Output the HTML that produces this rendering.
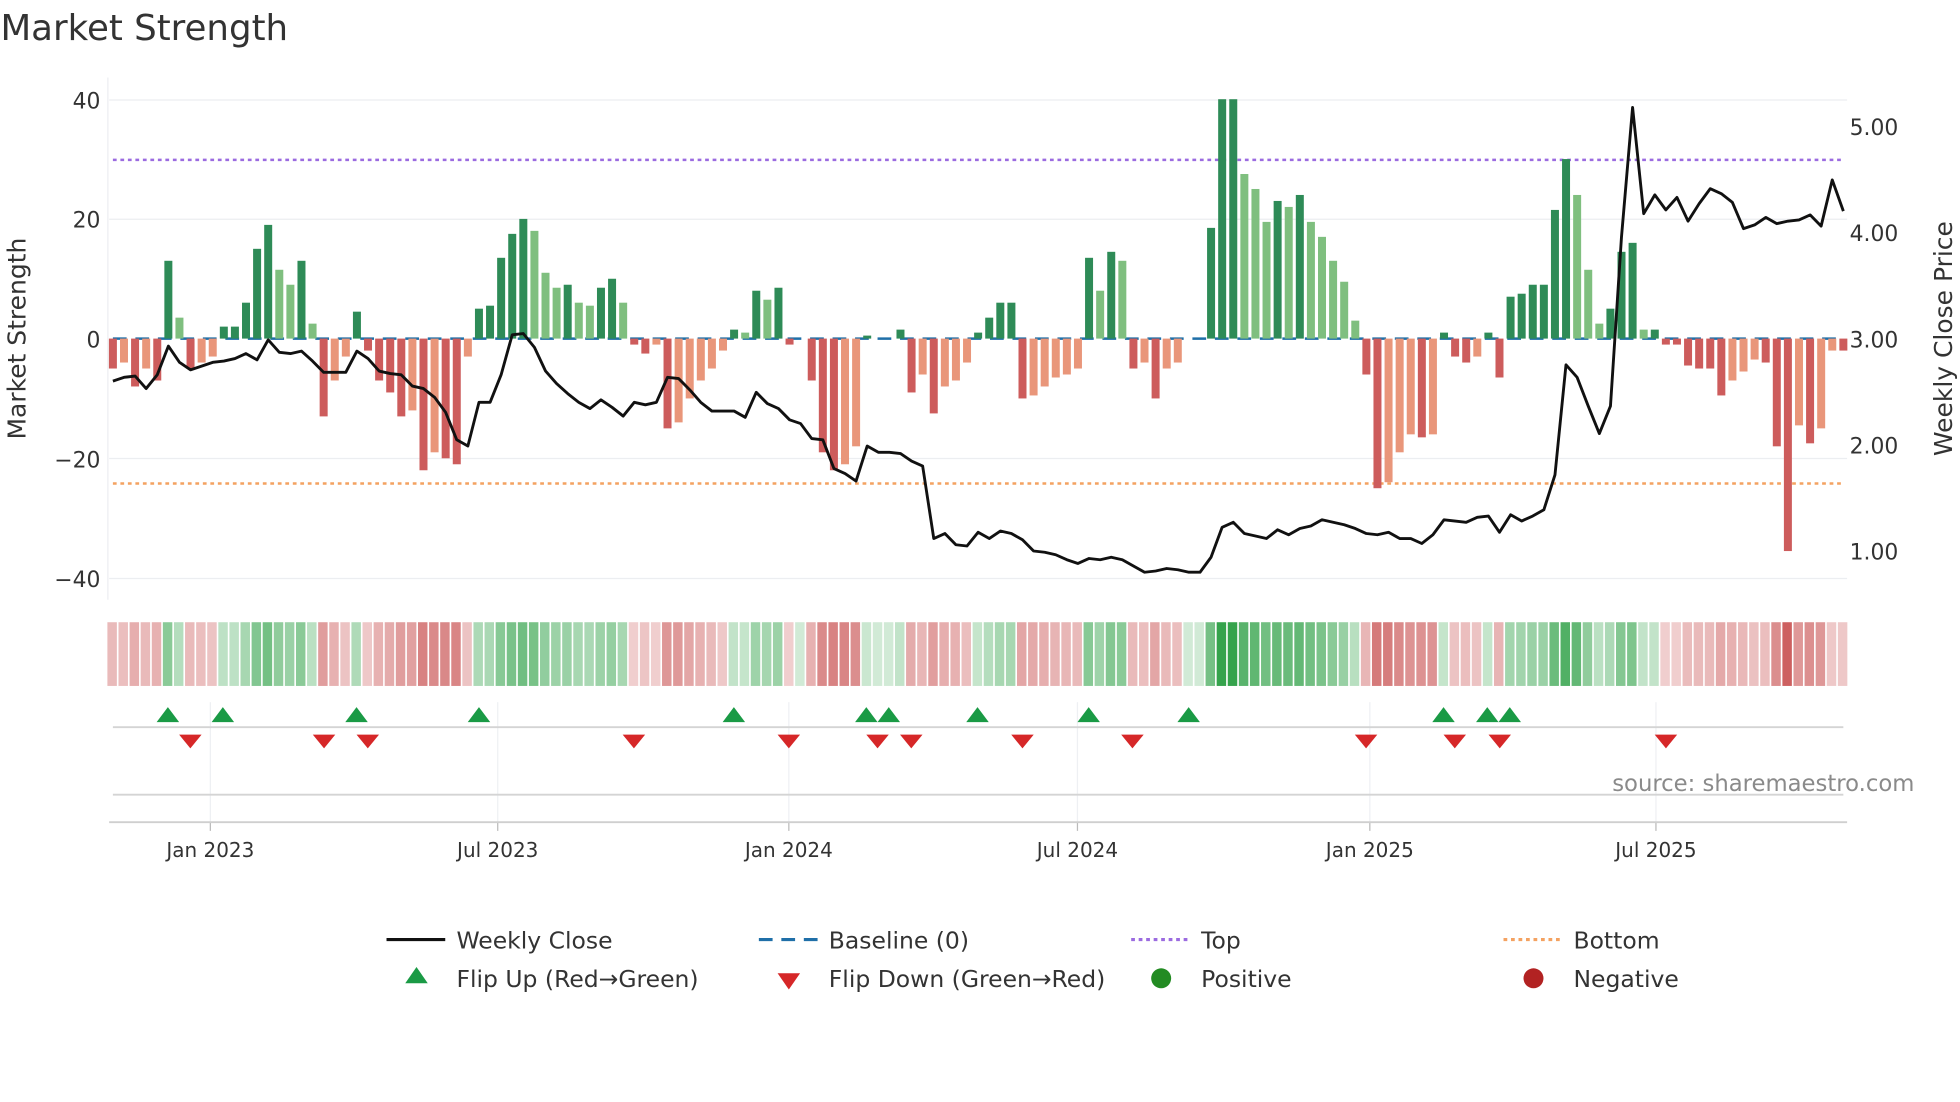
<!DOCTYPE html>
<html><head><meta charset="utf-8"><style>
html,body{margin:0;padding:0;background:#fff;width:1960px;height:1102px;overflow:hidden}
svg{display:block}
text{font-family:"DejaVu Sans","Liberation Sans",sans-serif;fill:#333}
</style></head><body>
<svg id="s" width="1960" height="1102" viewBox="0 0 1568 882" xmlns="http://www.w3.org/2000/svg">
<rect width="1568" height="882" fill="#fff"/>
<text x="0" y="32" font-size="28.5">Market Strength</text>
<g stroke="#eceef1" stroke-width="1">
<line x1="87" y1="80" x2="1478" y2="80"/><line x1="87" y1="175.5" x2="1478" y2="175.5"/>
<line x1="87" y1="367" x2="1478" y2="367"/><line x1="87" y1="463" x2="1478" y2="463"/>
<line x1="86" y1="62" x2="86" y2="480"/>
</g>
<g font-size="17.5" text-anchor="end">
<text x="80" y="87">40</text><text x="80" y="182">20</text><text x="80" y="278">0</text>
<text x="80" y="374">−20</text><text x="80" y="470">−40</text>
</g>
<g font-size="17.5">
<text x="1480" y="108">5.00</text><text x="1480" y="193">4.00</text><text x="1480" y="278">3.00</text>
<text x="1480" y="363">2.00</text><text x="1480" y="448">1.00</text>
</g>
<text transform="translate(20,271) rotate(-90)" font-size="20" text-anchor="middle">Market Strength</text>
<text transform="translate(1562,271) rotate(-90)" font-size="20" text-anchor="middle">Weekly Close Price</text>
<line x1="90" y1="128" x2="1475" y2="128" stroke="#9b6be0" stroke-width="2" stroke-dasharray="3,3"/>
<line x1="90" y1="387" x2="1475" y2="387" stroke="#f4a261" stroke-width="2" stroke-dasharray="3,3"/>
<line x1="90" y1="271" x2="1475" y2="271" stroke="#1f6fa8" stroke-width="2" stroke-dasharray="11,7"/>
<g id="bars"></g>
<polyline id="price" fill="none" stroke="#111" stroke-width="2.3" stroke-linejoin="round"/>
<g id="heat"></g>
<g stroke="#eef0f3" stroke-width="1" id="vg"></g>
<line x1="90" y1="582" x2="1475" y2="582" stroke="#d4d4d4" stroke-width="1.5"/>
<line x1="90" y1="636" x2="1475" y2="636" stroke="#d4d4d4" stroke-width="1.5"/>
<line x1="87" y1="658" x2="1478" y2="658" stroke="#cfcfcf" stroke-width="1.5"/>
<g id="marks"></g>
<text x="1290" y="633" font-size="18.2" style="fill:#8a8a8a">source: sharemaestro.com</text>
<g font-size="16" text-anchor="middle" id="xt"></g>
<g font-size="18.8">
<line x1="309" y1="752" x2="356" y2="752" stroke="#111" stroke-width="2.5"/>
<text x="365" y="759">Weekly Close</text>
<line x1="607" y1="752" x2="654" y2="752" stroke="#1f6fa8" stroke-width="2.5" stroke-dasharray="11,7"/>
<text x="663" y="759">Baseline (0)</text>
<line x1="905" y1="752" x2="952" y2="752" stroke="#9b6be0" stroke-width="2.5" stroke-dasharray="3,3"/>
<text x="961" y="759">Top</text>
<line x1="1203" y1="752" x2="1250" y2="752" stroke="#f4a261" stroke-width="2.5" stroke-dasharray="3,3"/>
<text x="1259" y="759">Bottom</text>
<polygon points="333,774 342,787 324,787" fill="#1a9a45"/>
<text x="365" y="790">Flip Up (Red→Green)</text>
<polygon points="622,779 640,779 631,792" fill="#d62728"/>
<text x="663" y="790">Flip Down (Green→Red)</text>
<circle cx="929" cy="783" r="8" fill="#228b22"/>
<text x="961" y="790">Positive</text>
<circle cx="1227" cy="783" r="8" fill="#b22222"/>
<text x="1259" y="790">Negative</text>
</g>
</svg>
<script>
var NS="http://www.w3.org/2000/svg";
function el(t,a,p){var e=document.createElementNS(NS,t);for(var k in a)e.setAttribute(k,a[k]);p.appendChild(e);return e;}
var V=[-5,-4,-8,-5,-7,13,3.5,-5,-4,-3,2,2,6,15,19,11.5,9,13,2.5,-13,-7,-3,4.5,-2,-7,-9,-13,-12,-22,-19,-20,-21,-3,5,5.5,13.5,17.5,20,18,11,8.5,9,6,5.5,8.5,10,6,-1,-2.5,-1,-15,-14,-10,-7,-5,-2,1.5,1,8,6.5,8.5,-1,0,-7,-19,-22,-21,-18,0.5,0,0,1.5,-9,-6,-12.5,-8,-7,-4,1,3.5,6,6,-10,-9.5,-8,-6.5,-6,-5,13.5,8,14.5,13,-5,-4,-10,-5,-4,0,0,18.5,40,40,27.5,25,19.5,23,22,24,19.5,17,13,9.5,3,-6,-25,-24,-19,-16,-16.5,-16,1,-3,-4,-3,1,-6.5,7,7.5,9,9,21.5,30,24,11.5,2.5,5,14.5,16,1.5,1.5,-1,-1,-4.5,-5,-5,-9.5,-7,-5.5,-3.5,-4,-18,-35.5,-14.5,-17.5,-15,-2,-2];
var P=[305,302,301,311,300,277,290,296,293,290,289,287,283,288,272,282,283,281,289,298,298,298,281,287,297,299,300,309,311,318,330,352,357,322,322,300,268,267,278,297,307,315,322,327,320,326,333,322,324,322,302,303,312,322,329,329,329,334,314,323,327,336,339,351,352,375,379,385,357,362,362,363,369,373,431,427,436,437,426,431,425,427,432,441,442,444,448,451,447,448,446,448,453,458,457,455,456,458,458,446,422,418,427,429,431,424,428,423,421,416,418,420,423,427,428,426,431,431,435,428,416,417,418,414,413,426,412,417,413,408,380,292,302,325,347,325,190,86,171,156,168,158,177,163,151,155,162,183,180,174,179,177,176,172,181,144,169];
var n=V.length,x0=90,dx=(1475-90)/(n-1);
var bars=document.getElementById('bars'),heat=document.getElementById('heat');
var pts=[];
for(var i=0;i<n;i++){
 var v=V[i],x=x0+dx*i,prev=i?V[i-1]:0;
 var y0=271,h=Math.abs(v)*4.79;
 var weak=Math.abs(v)<Math.abs(prev)&&(v*prev>0);
 var c=v>=0?(weak?'#7fbf7f':'#2e8b57'):(weak?'#e9967a':'#cd5c5c');
 if(Math.abs(v)>0.2) el('rect',{x:x-3.2,y:v>=0?y0-h:y0,width:6.4,height:h,fill:c},bars);
 var t=Math.min(1,Math.abs(v)/40),a=0.22+0.75*Math.pow(t,0.7);
 var hc=v>=0?'rgba(46,160,70,'+a+')':'rgba(200,80,80,'+a+')';
 el('rect',{x:x-4.4,y:498,width:dx-1.3,height:51,fill:hc},heat);
 pts.push(x.toFixed(1)+','+P[i]);
}
document.getElementById('price').setAttribute('points',pts.join(' '));
var T=[[168,'Jan 2023'],[398,'Jul 2023'],[631,'Jan 2024'],[862,'Jul 2024'],[1096,'Jan 2025'],[1325,'Jul 2025']];
var xt=document.getElementById('xt'),vg=document.getElementById('vg');
T.forEach(function(t){el('line',{x1:t[0],y1:562,x2:t[0],y2:658},vg);el('line',{x1:t[0],y1:658,x2:t[0],y2:665,stroke:'#bbb'},vg);var e=el('text',{x:t[0],y:686},xt);e.textContent=t[1];});
var mk=document.getElementById('marks');
[134,178,285,383,587,693,711,782,871,951,1155,1190,1208].forEach(function(x){el('polygon',{points:x+',566 '+(x+9)+',578 '+(x-9)+',578',fill:'#1a9a45'},mk);});
[152,259,294,507,631,702,729,818,906,1093,1164,1200,1333].forEach(function(x){el('polygon',{points:(x-9)+',588 '+(x+9)+',588 '+x+',599',fill:'#d62728'},mk);});
</script>
</body></html>
